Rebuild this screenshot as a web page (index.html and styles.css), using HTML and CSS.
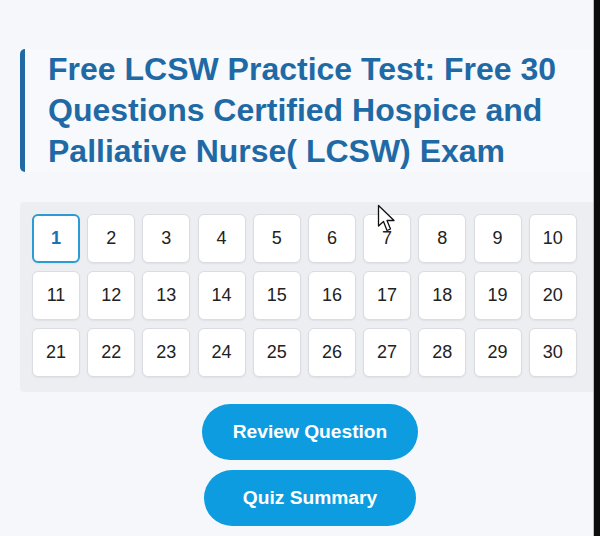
FILE: index.html
```html
<!DOCTYPE html>
<html lang="en">
<head>
    <meta charset="UTF-8">
    <meta name="viewport" content="width=device-width, initial-scale=1.0">
    <title>Free LCSW Practice Test</title>
    <link rel="stylesheet" href="styles.css">
</head>
<body>
    <div class="page">
        <div class="quiz-wrap">
            <!-- title -->
            <h1 class="quiz-title">Free LCSW Practice Test: Free 30 Questions Certified Hospice and Palliative Nurse( LCSW) Exam</h1>

            <!-- question navigation -->
            <div class="question-panel">
                <div class="question-grid" id="question-grid"></div>
            </div>

            <div class="quiz-actions">
                <button class="action-btn review-btn">Review Question</button>
                <button class="action-btn summary-btn">Quiz Summary</button>
            </div>
        </div>

        <!-- mouse cursor in the capture -->
        <svg class="cursor" width="22" height="30" viewBox="0 0 22 30">
            <path d="M1.5 1.5 L1.5 22 L6.5 17.5 L10 26.5 L13.5 25 L10 16.5 L17 16.5 Z" fill="#fff" stroke="#111" stroke-width="1.3" stroke-linejoin="round"/>
        </svg>
    </div>

    <script>
        // build the 30 question buttons
        const grid = document.getElementById('question-grid');
        grid.innerHTML = Array.from({length: 30}, (_, i) => `
            <button class="question-cell${i === 0 ? ' active' : ''}">${i + 1}</button>
        `).join('');
    </script>
</body>
</html>
```

FILE: styles.css
```css
* {
    margin: 0;
    padding: 0;
    box-sizing: border-box;
}

html {
    background: #0c0c0c;
}

body {
    font-family: 'Liberation Sans', Arial, sans-serif;
}

.page {
    position: relative;
    width: 594px;
    min-height: 536px;
    background: #f5f7fb;
    border-right: 1px solid #b9bcc2;
    overflow: hidden;
    padding-top: 49px;
}

.quiz-wrap {
    width: 580px;
    margin-left: 20px;
}

.quiz-title {
    font-size: 32px;
    font-weight: bold;
    line-height: 41px;
    color: #1f6aa5;
    background: #f7f9fc;
    border-left: 5px solid #1f6aa5;
    border-radius: 5px 0 0 5px;
    padding-left: 23px;
    padding-right: 20px;
}

.question-panel {
    margin-top: 30px;
    background: #eceef2;
    border-radius: 4px 0 0 4px;
    padding: 12px 12px 15px;
}

.question-grid {
    display: grid;
    grid-template-columns: repeat(10, 48px);
    grid-auto-rows: 49px;
    column-gap: 7.2px;
    row-gap: 8px;
}

.question-cell {
    font-family: 'Liberation Sans', Arial, sans-serif;
    font-size: 18px;
    color: #222;
    background: #fff;
    border: 1px solid #d9dce1;
    border-radius: 6px;
    box-shadow: 0 1px 2px rgba(0,0,0,0.06);
    cursor: pointer;
}

.question-cell.active {
    border: 2px solid #2b9ad5;
    color: #1872b3;
    font-weight: bold;
}

.quiz-actions {
    display: flex;
    flex-direction: column;
    align-items: center;
    gap: 10px;
    margin-top: 12px;
}

.action-btn {
    height: 56px;
    padding: 0 31px;
    min-width: 212px;
    border: none;
    border-radius: 28px;
    background: #0d9ce0;
    color: #fff;
    font-family: 'Liberation Sans', Arial, sans-serif;
    font-size: 19.2px;
    font-weight: bold;
    cursor: pointer;
}

.cursor {
    position: absolute;
    left: 377px;
    top: 204px;
}
```
